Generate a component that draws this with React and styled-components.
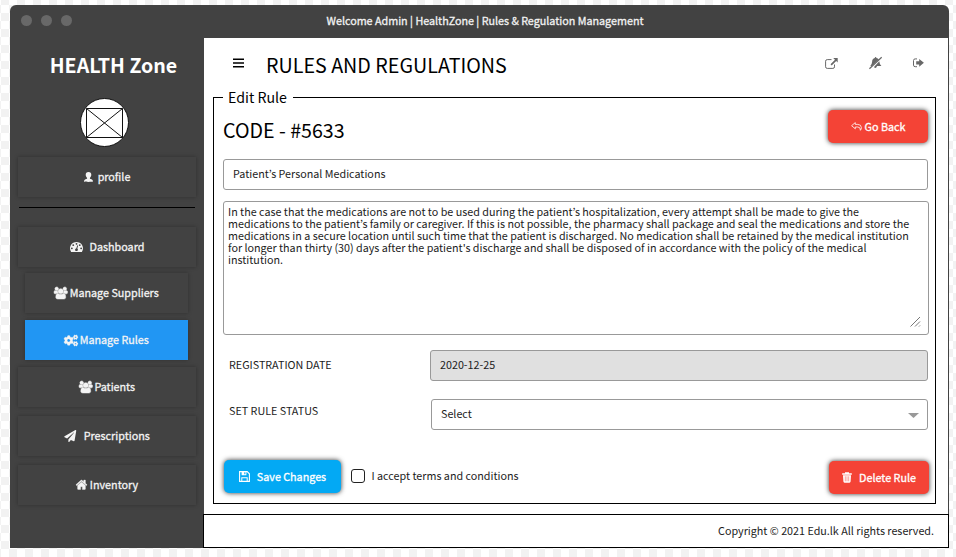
import React from "react";
import styled, { createGlobalStyle, css } from "styled-components";
import { FaCogs, FaPaperPlane } from "react-icons/fa";

const GlobalStyle = createGlobalStyle`
  * { box-sizing: border-box; }
  html, body { margin: 0; padding: 0; }
  body {
    width: 956px;
    height: 557px;
    overflow: hidden;
    background: #fff conic-gradient(#fff 25%, #f2f2f2 0 50%, #fff 0 75%, #f2f2f2 0) 9px 5px / 16px 16px;
    font: 10.76px/16px "Noto Sans CJK KR", "Noto Sans", sans-serif;
    color: #1c1c1c;
  }
`;

const heavy = css`
  -webkit-text-stroke: 0.3px currentColor;
`;

const Window = styled.div`
  display: grid;
  grid-template: 33px 510px / 194px 745px;
  width: 939px;
  margin: 5px 0 0 10px;
  border-radius: 6px 6px 0 0;
  background: #424242;
  overflow: hidden;
`;

const TitleBar = styled.header`
  grid-column: 1 / -1;
  display: grid;
  grid-template-columns: 1fr auto 1fr;
  align-items: center;
  padding: 0 0 2px 11px;
  color: #f2f2f2;
`;

const Dots = styled.div`
  display: flex;
  gap: 9px;
`;

const Dot = styled.span`
  width: 11px;
  height: 11px;
  border-radius: 50%;
  background: #686868;
`;

const WindowTitle = styled.div`
  ${heavy}
`;

const Sidebar = styled.aside`
  display: flex;
  flex-direction: column;
  align-items: center;
`;

const Brand = styled.h1`
  margin: 13px 0 0 13px;
  font-size: 19.6px;
  line-height: 28px;
  font-weight: 700;
  color: #fff;
`;

const Avatar = styled.svg`
  width: 49px;
  height: 49px;
  margin: 19px 5px 0 0;
`;

const NavItem = styled.button`
  display: flex;
  align-items: center;
  justify-content: center;
  gap: ${(p) => p.$gap}px;
  width: ${(p) => (p.$narrow ? 163 : 178)}px;
  height: 40px;
  flex: none;
  margin: ${(p) => p.$top}px ${(p) => (p.$narrow ? 1 : 0)}px 0 0;
  padding: 0;
  border: 0;
  background: ${(p) => (p.$active ? "#2196f3" : "#424242")};
  box-shadow: 0 0 4px rgba(0, 0, 0, 0.3);
  color: #f4f4f4;
  font: inherit;
  ${heavy}
`;

const Divider = styled.hr`
  width: 176px;
  height: 1px;
  margin: 10px 0 0;
  border: 0;
  background: #000;
`;

const Icon = styled.svg`
  flex: none;
  width: ${(p) => p.$w}px;
  height: ${(p) => p.$h}px;
  fill: currentColor;
  overflow: visible;
`;

const Main = styled.main`
  display: flex;
  flex-direction: column;
  background: #fff;
  border-right: 1px solid #424242;
`;

const Header = styled.div`
  display: flex;
  align-items: center;
  height: 49px;
  padding: 6px 24px 0 29px;
`;

const PageTitle = styled.h2`
  flex: 1;
  margin: -1px 0 0 22px;
  font-size: 19.7px;
  line-height: 28px;
  font-weight: 400;
  color: #000;
`;

const Tools = styled.div`
  display: flex;
  align-items: center;
  gap: 31px;
  margin-top: -5px;
  color: #686868;
`;

const MenuButton = styled.div`
  display: flex;
  margin-top: -5px;
  color: #000;
`;

const RuleForm = styled.fieldset`
  display: flex;
  flex-direction: column;
  width: 723px;
  height: 417px;
  margin: 0 0 0 9px;
  padding: 0 6px 0 9px;
  border: 1px solid #000;
`;

const Legend = styled.legend`
  height: 21px;
  padding: 0 6px 0 5px;
  font-size: 14.2px;
  line-height: 21px;
  color: #000;
`;

const CodeRow = styled.div`
  display: flex;
  justify-content: space-between;
  height: 51px;
  padding: 2px 1px 0 0;
`;

const Code = styled.h3`
  margin: 6px 0 0 0;
  font-size: 19.65px;
  line-height: 28px;
  font-weight: 400;
  color: #000;
`;

const ActionButton = styled.button`
  display: flex;
  align-items: center;
  justify-content: center;
  gap: ${(p) => p.$gap}px;
  width: ${(p) => p.$w}px;
  height: 33px;
  padding: 0;
  border: 0;
  border-radius: 5px;
  background: ${(p) => (p.$danger ? "#f44336" : "#03a9f4")};
  box-shadow: 0 0 5px rgba(0, 0, 0, 0.8);
  color: #fff;
  font: inherit;
  ${heavy}
`;

const Field = styled.div`
  display: flex;
  align-items: center;
  justify-content: space-between;
  width: ${(p) => p.$w}px;
  height: 31px;
  padding: 0 9px 2px;
  border: 1px solid #999;
  border-radius: 3px;
  background: ${(p) => (p.$disabled ? "#e0e0e0" : "#fff")};
`;

const TextArea = styled.div`
  display: flex;
  flex-direction: column;
  justify-content: space-between;
  width: 706px;
  height: 134px;
  margin-top: 11px;
  padding: 4px 7px 7px 4px;
  border: 1px solid #999;
  border-radius: 3px;
`;

const RuleText = styled.p`
  margin: 0;
  line-height: 12px;
  white-space: pre;
`;

const Grip = styled(Icon)`
  align-self: flex-end;
  stroke: #777;
`;

const Caret = styled(Icon)`
  margin-top: 4px;
  margin-right: -1px;
  fill: #999;
`;

const FieldRow = styled.div`
  display: flex;
  justify-content: space-between;
  margin-top: ${(p) => p.$top}px;
  padding: 0 1px 0 6px;
`;

const Label = styled.label`
  padding-top: ${(p) => p.$top}px;
`;

const Actions = styled.div`
  display: flex;
  align-items: flex-start;
  margin-top: 30px;
  padding-left: 1px;
`;

const Consent = styled.label`
  display: flex;
  align-items: center;
  flex: 1;
  gap: 6.5px;
  height: 31px;
  padding-left: 10px;
`;

const CheckBox = styled.span`
  width: 14px;
  height: 14px;
  border: 1.5px solid #222;
  border-radius: 3px;
`;

const DeleteSlot = styled.div`
  padding-top: 1px;
`;

const Footer = styled.footer`
  display: flex;
  align-items: center;
  justify-content: flex-end;
  height: 34px;
  margin: 10px -1px 0 -1px;
  padding-right: 14px;
  border: 1px solid #000;
`;

const PATHS = {
  users:
    "M593 896q-162 5-265 128h-134q-82 0-138-40.5t-56-118.5q0-353 124-353 6 0 43.5 21t97.5 42.5 119 21.5q67 0 133-23-5 37-5 66 0 159 93 256zm1071 637q0 120-73 189.5t-194 69.5h-874q-121 0-194-69.5t-73-189.5q0-53 3.5-103.5t14-109 26.5-108.5 43-97.5 62-81 85.5-53.5 111.5-20q10 0 43 21.5t73 48 107 48 135 21.5 135-21.5 107-48 73-48 43-21.5q61 0 111.5 20t85.5 53.5 62 81 43 97.5 26.5 108.5 14 109 3.5 103.5zm-1024-1277q0 106-75 181t-181 75-181-75-75-181 75-181 181-75 181 75 75 181zm704 384q0 159-112.5 271.5t-271.5 112.5-271.5-112.5-112.5-271.5 112.5-271.5 271.5-112.5 271.5 112.5 112.5 271.5zm576 225q0 78-56 118.5t-138 40.5h-134q-103-123-265-128 93-97 93-256 0-29-5-66 66 23 133 23 59 0 119-21.5t97.5-42.5 43.5-21q124 0 124 353zm-128-609q0 106-75 181t-181 75-181-75-75-181 75-181 181-75 181 75 75 181z",
  home:
    "M1472 992v480q0 26-19 45t-45 19h-384v-384h-256v384h-384q-26 0-45-19t-19-45v-480q0-1 .5-3t.5-3l575-474 575 474q1 2 1 6zm223-69l-62 74q-8 9-21 11h-3q-13 0-21-7l-692-577-692 577q-12 8-24 7-13-2-21-11l-62-74q-8-10-7-23.5t11-21.5l719-599q32-26 76-26t76 26l244 204v-195q0-14 9-23t23-9h192q14 0 23 9t9 23v408l219 182q10 8 11 21.5t-7 23.5z",
  gauge:
    "M384 1152q0-53-37.5-90.5t-90.5-37.5-90.5 37.5-37.5 90.5 37.5 90.5 90.5 37.5 90.5-37.5 37.5-90.5zm192-448q0-53-37.5-90.5t-90.5-37.5-90.5 37.5-37.5 90.5 37.5 90.5 90.5 37.5 90.5-37.5 37.5-90.5zm428 481l101-382q6-26-7.5-48.5t-38.5-29.5-48 6.5-30 39.5l-101 382q-60 5-107 43.5t-63 98.5q-20 77 20 146t117 89 146-20 89-117q16-60-6-117t-72-91zm660-33q0-53-37.5-90.5t-90.5-37.5-90.5 37.5-37.5 90.5 37.5 90.5 90.5 37.5 90.5-37.5 37.5-90.5zm-640-640q0-53-37.5-90.5t-90.5-37.5-90.5 37.5-37.5 90.5 37.5 90.5 90.5 37.5 90.5-37.5 37.5-90.5zm448 192q0-53-37.5-90.5t-90.5-37.5-90.5 37.5-37.5 90.5 37.5 90.5 90.5 37.5 90.5-37.5 37.5-90.5zm320 448q0 261-141 483-19 29-54 29h-1402q-35 0-54-29-141-221-141-483 0-182 71-348t191-286 286-191 348-71 348 71 286 191 191 286 71 348z",
};

const UsersIcon = () => (
  <Icon $w={13.5} $h={12} viewBox="0 0 1920 1792" preserveAspectRatio="none" stroke="currentColor" strokeWidth="70"><path d={PATHS.users} /></Icon>
);
const HomeIcon = () => (
  <Icon $w={11} $h={9.5} viewBox="89 250 1614 1290" preserveAspectRatio="none" stroke="currentColor" strokeWidth="50"><path d={PATHS.home} /></Icon>
);
const GaugeIcon = () => (
  <Icon $w={13} $h={10} viewBox="0 256 1792 1408" preserveAspectRatio="none"><path d={PATHS.gauge} /></Icon>
);
const ProfileIcon = () => (
  <Icon $w={9} $h={10} viewBox="0 0 9 10">
    <path d="M4.5 0C6.4 0 7.400 1.200 7.300 2.900 7.200 4.100 6.700 5.100 5.900 5.700c-.2.7 0 1.100.6 1.400C7.900 7.600 9 7.900 9 9.600c-1 .5-8 .5-9 0 0-1.700 1.100-2 2.500-2.500.6-.3.800-.7.600-1.400C2.300 5.100 1.800 4.100 1.700 2.900 1.600 1.200 2.600 0 4.500 0z" />
  </Icon>
);
const CogsIcon = () => <Icon as={FaCogs} $w={14} $h={13} stroke="currentColor" strokeWidth="16" />;
const PlaneIcon = () => <Icon as={FaPaperPlane} $w={12.5} $h={12} />;

const MenuIcon = () => (
  <Icon $w={11} $h={10} viewBox="0 0 11 10">
    <path d="M0 .5h11v1.500H0zM0 4.200h11v1.500H0zM0 7.900h11v1.500H0z" />
  </Icon>
);
const ExternalIcon = () => (
  <Icon $w={13} $h={11} viewBox="0 0 13 11">
    <path d="M6.500 1.600H2.300Q.6 1.600.6 3.200v5.600q0 1.600 1.700 1.600h5.600q1.600 0 1.600-1.600V6.500" fill="none" stroke="currentColor" strokeWidth="1" />
    <path d="M8.200 0h4.500v4.500l-1.500-1.500-4.500 4.400-1.200-1.200L10 1.700z" />
  </Icon>
);
const BellOffIcon = () => (
  <Icon $w={13} $h={12} viewBox="0 0 13 12">
    <path d="M6.600 0q.8 0 .8.9 1.600.2 2.500 1.500L2.700 9H1.300Q3 7.200 3.100 4.700 3.200 1.500 5.800.9q0-.9.8-.9zM10.300 4.200q.2 3.200 2.100 4.800H8q-.1 1.800-1.500 1.900-1-.1-1.500-1z" />
    <path d="M12.700.3.400 11.700" stroke="currentColor" strokeWidth="1.200" />
  </Icon>
);
const SignOutIcon = () => (
  <Icon $w={11} $h={10} viewBox="0 0 11 10">
    <path d="M4 .9H2.200Q.5.900.5 2.500v4.600q0 1.600 1.700 1.600H4" fill="none" stroke="currentColor" />
    <path d="M3.200 3.200h3V.9L10.900 4.800 6.200 8.700V6.400h-3z" />
  </Icon>
);
const ReplyIcon = () => (
  <Icon $w={11} $h={9} viewBox="0 0 11 9">
    <path d="M.6 3.700 4.300.6v1.800h2.500q3.500.1 3.600 3.200 0 1.500-1 2.700.3-3.200-2.600-3.300H4.300v1.800z" fill="none" stroke="currentColor" strokeWidth=".8" />
  </Icon>
);
const SaveIcon = () => (
  <Icon $w={11} $h={11} viewBox="0 0 11 11">
    <path d="M.6.600h7.600l2.200 2.200v7.600H.6z" fill="none" stroke="currentColor" strokeWidth="1.100" />
    <path d="M2.600.600h4.800v3.600H2.600zM2.300 6.200h6.400v4.200h-1V7.200H3.300v3.200h-1z" />
    <path d="M5.300 1.300h1.100v2H5.300z" fill="#03a9f4" />
  </Icon>
);
const TrashIcon = () => (
  <Icon $w={10} $h={11} viewBox="0 0 10 11">
    <path d="M3 1.300V.2h4v1.100h2.800v1.400H.2V1.300zM1 3.300h8l-.4 6.300q-.1 1.100-1.100 1.100h-5q-1 0-1.100-1.100z" />
    <path d="M3.300 4.300v5M5 4.300v5M6.700 4.300v5" stroke="#f44336" strokeWidth=".5" />
  </Icon>
);

const NAV = [
  { label: "Dashboard", icon: GaugeIcon, gap: 7, top: 19 },
  { label: "Manage Suppliers", icon: UsersIcon, gap: 2, top: 6, narrow: true },
  { label: "Manage Rules", icon: CogsIcon, gap: 1.5, top: 7, narrow: true, active: true },
  { label: "Patients", icon: UsersIcon, gap: 2, top: 7 },
  { label: "Prescriptions", icon: PlaneIcon, gap: 7, top: 9 },
  { label: "Inventory", icon: HomeIcon, gap: 3, top: 9 },
];

const RULE_TEXT = [
  "In the case that the medications are not to be used during the patient’s hospitalization, every attempt shall be made to give the",
  "medications to the patient’s family or caregiver. If this is not possible, the pharmacy shall package and seal the medications and store the",
  "medications in a secure location until such time that the patient is discharged. No medication shall be retained by the medical institution",
  "for longer than thirty (30) days after the patient's discharge and shall be disposed of in accordance with the policy of the medical",
  "institution.",
].join("\n");

export default function App() {
  return (
    <>
      <GlobalStyle />
      <Window>
        <TitleBar>
          <Dots><Dot /><Dot /><Dot /></Dots>
          <WindowTitle>Welcome Admin | HealthZone | Rules &amp; Regulation Management</WindowTitle>
        </TitleBar>
        <Sidebar>
          <Brand>HEALTH Zone</Brand>
          <Avatar viewBox="0 0 49 49" fill="none" stroke="#111">
            <circle cx="24.500" cy="24.500" r="24" fill="#fff" />
            <path d="M6.500 10.500h36v29h-36zl36 29m0-29-36 29" />
          </Avatar>
          <NavItem $gap={5} $top={10}><ProfileIcon />profile</NavItem>
          <Divider />
          {NAV.map(({ label, icon: Glyph, gap, top, narrow, active }) => (
            <NavItem key={label} $gap={gap} $top={top} $narrow={narrow} $active={active}>
              <Glyph />{label}
            </NavItem>
          ))}
        </Sidebar>
        <Main>
          <Header>
            <MenuButton><MenuIcon /></MenuButton>
            <PageTitle>RULES AND REGULATIONS</PageTitle>
            <Tools><ExternalIcon /><BellOffIcon /><SignOutIcon /></Tools>
          </Header>
          <RuleForm>
            <Legend>Edit Rule</Legend>
            <CodeRow>
              <Code>CODE - #5633</Code>
              <ActionButton $danger $w={100} $gap={3}><ReplyIcon />Go Back</ActionButton>
            </CodeRow>
            <Field $w={705}>Patient’s Personal Medications</Field>
            <TextArea>
              <RuleText>{RULE_TEXT}</RuleText>
              <Grip $w={11} $h={11} viewBox="0 0 11 11"><path d="M.5 10.500l9.500-9.500M5 10.500l5-5M9 10.500l1-1" /></Grip>
            </TextArea>
            <FieldRow $top={15}>
              <Label $top={7}>REGISTRATION DATE</Label>
              <Field $w={498} $disabled>2020-12-25</Field>
            </FieldRow>
            <FieldRow $top={18}>
              <Label $top={4}>SET RULE STATUS</Label>
              <Field $w={497}>
                Select
                <Caret $w={11} $h={5} viewBox="0 0 11 5"><path d="M0 0h11L5.500 5z" /></Caret>
              </Field>
            </FieldRow>
            <Actions>
              <ActionButton $w={117} $gap={7}><SaveIcon />Save Changes</ActionButton>
              <Consent><CheckBox />I accept terms and conditions</Consent>
              <DeleteSlot>
                <ActionButton $danger $w={100} $gap={7}><TrashIcon />Delete Rule</ActionButton>
              </DeleteSlot>
            </Actions>
          </RuleForm>
          <Footer>Copyright © 2021 Edu.lk All rights reserved.</Footer>
        </Main>
      </Window>
    </>
  );
}
